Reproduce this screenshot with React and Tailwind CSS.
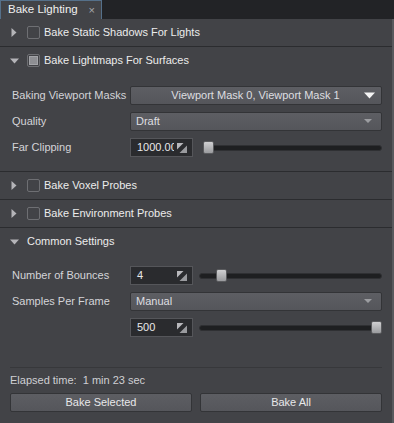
import { useState } from "react";

function Arrow({ open }) {
  return open ? (
    <svg width="9" height="6" viewBox="0 0 9 6" className="shrink-0">
      <path d="M0 0.5 L9 0.5 L4.5 5.5 Z" fill="#b4b4b8" />
    </svg>
  ) : (
    <svg width="6" height="9" viewBox="0 0 6 9" className="shrink-0">
      <path d="M0.5 0 L5.5 4.5 L0.5 9 Z" fill="#b4b4b8" />
    </svg>
  );
}

function Check({ partial }) {
  return (
    <div className="w-[13px] h-[13px] border border-[#6e6f73] rounded-[2px] flex items-center justify-center shrink-0">
      {partial && <div className="w-[9px] h-[9px] bg-[#8e8f93] border border-[#a3a4a8]" />}
    </div>
  );
}

function Header({ title, open, check, partial }) {
  return (
    <div className="h-[27px] flex items-center shrink-0">
      <div className="w-[27px] flex justify-center pl-[1px]">
        <Arrow open={open} />
      </div>
      {check && <Check partial={partial} />}
      <span className={`${check ? "ml-[4px]" : "ml-0"} text-[#ececec] whitespace-nowrap`}>{title}</span>
    </div>
  );
}

function Sep() {
  return <div className="h-px bg-[#2b2c2f] shrink-0" />;
}

function SpinIcon() {
  return (
    <svg width="10" height="10" viewBox="0 0 10 10">
      <path d="M0 0 L6.5 0 L0 6.5 Z" fill="#b8b8bc" />
      <path d="M10 10 L2.5 10 L10 2.5 Z" fill="#9a9b9f" />
    </svg>
  );
}

function Spin({ value }) {
  return (
    <div className="w-[63px] h-[19px] bg-[#2a2b2e] border border-[#55565a] flex items-center shrink-0">
      <span className="flex-1 pl-[6px] overflow-hidden whitespace-nowrap text-[#e8e8ea]">{value}</span>
      <div className="pr-[5px] pl-[3px] flex items-center">
        <SpinIcon />
      </div>
    </div>
  );
}

function Slider({ pos }) {
  return (
    <div className="flex-1 h-[19px] relative flex items-center">
      <div className="w-full h-[6px] bg-[#1e1f21] rounded-[3px] border border-[#2f3033]" />
      <div
        className="absolute top-[3px] w-[11px] h-[13px] rounded-[2px] bg-gradient-to-b from-[#d0d0d2] to-[#9a9b9e] border border-[#5a5b5e]"
        style={{ left: `calc(${pos}% - ${pos * 0.11}px)` }}
      />
    </div>
  );
}

function Combo({ text, center, bright }) {
  return (
    <div className="flex-1 h-[19px] rounded-[2px] border border-[#333437] bg-gradient-to-b from-[#5d5e63] to-[#55565b] flex items-center">
      <span className={`flex-1 whitespace-nowrap ${center ? "text-center pl-[16px]" : "pl-[5px]"} text-[#dedee0]`}>{text}</span>
      <svg width="11" height="7" viewBox="0 0 11 7" className={bright ? "mr-[6px]" : "mr-[7px]"}>
        {bright ? (
          <path d="M0 0.5 L11 0.5 L5.5 6.5 Z" fill="#f4f4f4" />
        ) : (
          <path d="M1 1 L9 1 L5 5 Z" fill="#9c9da1" />
        )}
      </svg>
    </div>
  );
}

function Field({ label, children }) {
  return (
    <div className="h-[19px] flex items-center pl-[12px] pr-[10px]">
      <span className="w-[118px] shrink-0 whitespace-nowrap text-[#d4d4d8]">{label}</span>
      <div className="flex-1 flex items-center">{children}</div>
    </div>
  );
}

export default function App() {
  const [tab] = useState("Bake Lighting");
  return (
    <div
      className="w-[394px] h-[423px] bg-[#222326] flex flex-col text-[11px] overflow-hidden"
      style={{ fontFamily: "'Liberation Sans', Arial, sans-serif" }}
    >
      <div className="h-[19px] flex shrink-0">
        <div className="w-[102px] h-[19px] bg-[#424347] border-t border-l border-r border-[#55708a] flex items-center pl-[7px]">
          <span className="text-[#f0f0f0] text-[11.5px] leading-none">{tab}</span>
          <span className="ml-auto mr-[6px] text-[#a8a8ac] text-[11px] leading-none">×</span>
        </div>
      </div>
      <div className="flex-1 bg-[#424347] border-r-2 border-[#58595d] flex flex-col">
        <Header title="Bake Static Shadows For Lights" check />
        <Sep />
        <Header title="Bake Lightmaps For Surfaces" open check partial />
        <div className="flex flex-col gap-[7px] pt-[12px] pb-[14px]">
          <Field label="Baking Viewport Masks">
            <Combo text="Viewport Mask 0, Viewport Mask 1" center bright />
          </Field>
          <Field label="Quality">
            <Combo text="Draft" />
          </Field>
          <Field label="Far Clipping">
            <Spin value="1000.000" />
            <div className="w-[10px]" />
            <Slider pos={0} />
          </Field>
        </div>
        <Sep />
        <Header title="Bake Voxel Probes" check />
        <Sep />
        <Header title="Bake Environment Probes" check />
        <Sep />
        <Header title="Common Settings" open />
        <div className="flex flex-col gap-[7px] pt-[11px]">
          <Field label="Number of Bounces">
            <Spin value="4" />
            <div className="w-[6px]" />
            <Slider pos={10} />
          </Field>
          <Field label="Samples Per Frame">
            <Combo text="Manual" />
          </Field>
          <Field label="">
            <Spin value="500" />
            <div className="w-[6px]" />
            <Slider pos={100} />
          </Field>
        </div>
        <div className="flex-1" />
        <div className="h-px bg-[#37383b] mx-[10px]" />
        <div className="h-[25px] flex items-center pl-[10px] text-[#cfcfd3]">
          Elapsed time:&nbsp; 1 min 23 sec
        </div>
        <div className="flex gap-[8px] px-[10px] pb-[11px]">
          <button className="flex-1 h-[19px] rounded-[2px] border border-[#333437] bg-gradient-to-b from-[#5d5e63] to-[#55565b] text-[#e8e8ea] leading-none">
            Bake Selected
          </button>
          <button className="flex-1 h-[19px] rounded-[2px] border border-[#333437] bg-gradient-to-b from-[#5d5e63] to-[#55565b] text-[#e8e8ea] leading-none">
            Bake All
          </button>
        </div>
      </div>
    </div>
  );
}
